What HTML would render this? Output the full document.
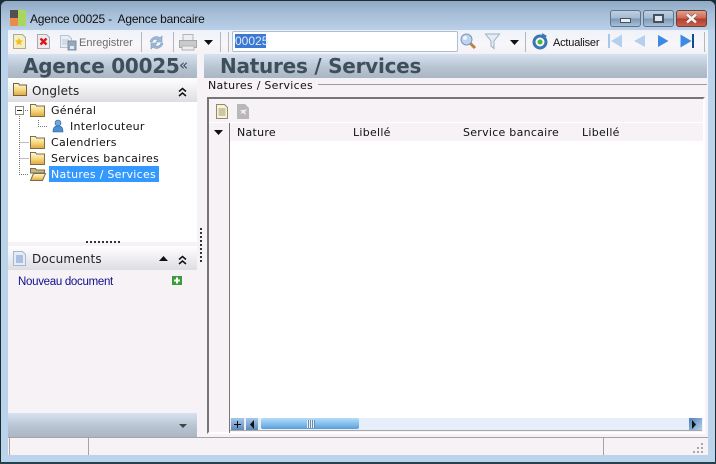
<!DOCTYPE html>
<html><head><meta charset="utf-8">
<style>
html,body{margin:0;padding:0;width:716px;height:464px;overflow:hidden;background:#1c2c34}
*{box-sizing:border-box}
.a{position:absolute}
.t{position:absolute;font-family:"DejaVu Sans",sans-serif;font-size:11px;line-height:14px;color:#111;white-space:nowrap;letter-spacing:.27px}
.l{position:absolute;font-family:"Liberation Sans",sans-serif;font-size:11px;line-height:14px;color:#111;white-space:nowrap}
.hd{position:absolute;font-family:"DejaVu Sans",sans-serif;font-weight:bold;font-size:20px;line-height:24px;color:#3e4f5c;white-space:nowrap;letter-spacing:-.25px}
svg{position:absolute;overflow:visible}
</style></head><body>
<svg width="0" height="0" style="left:0;top:0"><defs>
<linearGradient id="fg" x1="0" y1="0" x2="0" y2="1"><stop offset="0" stop-color="#fff8dc"/><stop offset=".5" stop-color="#f8d880"/><stop offset="1" stop-color="#e0a840"/></linearGradient>
</defs></svg>
<div class="a" id="win" style="left:1px;top:1px;width:714px;height:461px;border-radius:6px 6px 0 0;background:#bcd3ec"></div>
<div class="a" style="left:1px;top:1px;width:714px;height:30px;border-radius:6px 6px 0 0;background:linear-gradient(180deg,#8fa9c4 0,#a5bdd6 40%,#bbd1e9 100%)"></div>
<!-- title -->
<svg style="left:10px;top:10px" width="16" height="16"><rect width="8" height="8" fill="#55504f"/><rect x="8" width="8" height="16" fill="#a9d65c"/><rect y="8" width="8" height="8" fill="#ec8a4c"/></svg>
<div class="t" style="left:30px;top:12px;font-family:'Liberation Sans',sans-serif;font-size:12px;letter-spacing:-.2px;">Agence 00025 -&nbsp; Agence bancaire</div>
<!-- window buttons -->
<div class="a" style="left:610px;top:10px;width:31px;height:17px;border:1px solid #5f7487;border-radius:3px;background:linear-gradient(180deg,#bed0e3,#a4bbd2 45%,#7f9ab6 55%,#a8c0d8)"></div>
<div class="a" style="left:620px;top:18px;width:11px;height:5px;background:#e8eef4;border:1px solid #44525e"></div>
<div class="a" style="left:643px;top:10px;width:31px;height:17px;border:1px solid #5f7487;border-radius:3px;background:linear-gradient(180deg,#bed0e3,#a4bbd2 45%,#7f9ab6 55%,#a8c0d8)"></div>
<div class="a" style="left:653px;top:14px;width:11px;height:9px;background:#dfe8f0;border:2px solid #44525e"></div>
<div class="a" style="left:676px;top:10px;width:31px;height:17px;border:1px solid #6b4038;border-radius:3px;background:linear-gradient(180deg,#e0a090,#cf6a56 45%,#b24030 55%,#c8604c)"></div>
<svg style="left:685px;top:13px" width="13" height="11"><path d="M2 1.500l9 8m0-8l-9 8" stroke="#3a2420" stroke-width="3.600" opacity=".55"/><path d="M2 1.500l9 8m0-8l-9 8" stroke="#f6f6f6" stroke-width="2.600"/></svg>

<!-- toolbar -->
<div class="a" style="left:8px;top:30px;width:700px;height:24px;background:linear-gradient(180deg,#eef2f8,#f8f6fa 60%,#f4f1f5)"></div>
<svg style="left:13px;top:34px" width="13" height="15"><path d="M.5.5h9l3 3v11H.5z" fill="#f5efc8" stroke="#b0a890"/><path d="M6 3.500l1.200 2.700 2.800.3-2 2 .6 2.800L6 9.900l-2.600 1.400.6-2.800-2-2 2.800-.3z" fill="#f0c020"/></svg>
<svg style="left:37px;top:34px" width="13" height="15"><path d="M.5.5h9l3 3v11H.5z" fill="#ececf0" stroke="#a8a8b0"/><path d="M3.500 4.500l6 6m0-6l-6 6" stroke="#d81818" stroke-width="2.400"/></svg>
<svg style="left:60px;top:35px" width="17" height="15"><path d="M.5.5h8l3 3v9H.5z" fill="#e8eef6" stroke="#b8c4d0"/><path d="M2 5h7M2 7h7M2 9h7" stroke="#bcc8d6"/><rect x="8" y="6" width="8" height="9" fill="#96a8bc" stroke="#7e90a8"/><rect x="10" y="11" width="4" height="3" fill="#e4eaf2"/></svg>
<div class="l" style="left:79px;top:36px;color:#6c6c6c">Enregistrer</div>
<div class="a" style="left:141px;top:32px;width:1px;height:20px;background:#b2b8c0"></div>
<svg style="left:148px;top:34px" width="17" height="17"><path d="M2 8C3 3 9 1 12 4l2-2v6H8l2-2C8 4.500 5 5 4 8z" fill="#9db8d4" stroke="#7e9cba" stroke-width=".6"/><path d="M15 9C14 14 8 16 5 13l-2 2V9h6l-2 2c2 2 5 1.500 6-2z" fill="#9db8d4" stroke="#7e9cba" stroke-width=".6"/></svg>
<div class="a" style="left:173px;top:32px;width:1px;height:20px;background:#b2b8c0"></div>
<svg style="left:179px;top:34px" width="18" height="17"><rect x="4" y=".5" width="10" height="6" fill="#eceef0" stroke="#b0b4b8"/><rect x=".5" y="6.500" width="17" height="7" fill="#c8cacc" stroke="#a4a6a8"/><rect x="3" y="12" width="12" height="4" fill="#ecedee" stroke="#b0b2b4"/></svg>
<svg style="left:204px;top:40px" width="9" height="5"><path d="M0 0h9L4.500 5z" fill="#111"/></svg>
<div class="a" style="left:220px;top:32px;width:1px;height:20px;background:#b2b8c0"></div>
<div class="a" style="left:228px;top:32px;width:1px;height:20px;background:#b2b8c0"></div>
<div class="a" style="left:232px;top:31px;width:226px;height:21px;background:#fff;border:1px solid #a9bfd3;border-radius:2px"></div>
<div class="a" style="left:235px;top:34px;width:31px;height:14px;background:#3a78d4"></div>
<div class="l" style="left:235px;top:34px;font-size:12px;color:#dfeaf8">00025</div>
<svg style="left:460px;top:33px" width="17" height="17"><path d="M10 10l5 5" stroke="#b8843c" stroke-width="3"/><circle cx="6.500" cy="6.500" r="5.500" fill="#bcd4f4" stroke="#8296b8"/><circle cx="5" cy="5" r="2" fill="#eef4fc"/></svg>
<svg style="left:485px;top:33px" width="16" height="17"><path d="M.5 1h14L9 8v7.500L6 13V8z" fill="#e4edf5" stroke="#9cb0c4"/></svg>
<svg style="left:510px;top:40px" width="9" height="5"><path d="M0 0h9L4.500 5z" fill="#111"/></svg>
<div class="a" style="left:525px;top:32px;width:1px;height:20px;background:#b2b8c0"></div>
<svg style="left:532px;top:33px" width="17" height="17"><circle cx="8" cy="9" r="6" fill="none" stroke="#3b76b4" stroke-width="3"/><circle cx="8" cy="9" r="2.500" fill="#42b83c"/><path d="M10 0l5 3-4 3z" fill="#3b76b4"/></svg>
<div class="l" style="left:553px;top:36px;font-size:11px;letter-spacing:-.2px">Actualiser</div>
<svg style="left:608px;top:34px" width="15" height="15"><rect width="2" height="14" x="0" fill="#a8c8ea"/><path d="M14 .5v13L3 7z" fill="#b4d0ee"/></svg>
<svg style="left:633px;top:34px" width="13" height="15"><path d="M12 1v12L1 7z" fill="#b4d0ee"/></svg>
<svg style="left:657px;top:34px" width="13" height="15"><path d="M1 1v12L11.500 7z" fill="#3c8ae4"/></svg>
<svg style="left:680px;top:34px" width="15" height="15"><path d="M.5.500v13L11.500 7z" fill="#3c8ae4"/><rect x="12" width="2" height="14" fill="#134a94"/></svg>
<div class="a" style="left:704px;top:32px;width:1px;height:20px;background:#b2b8c0"></div>

<!-- main content bg -->
<div class="a" style="left:8px;top:54px;width:700px;height:401px;background:#f6f2f6"></div>
<!-- left header -->
<div class="a" style="left:8px;top:54px;width:189px;height:24px;background:linear-gradient(180deg,#d6e2f0,#b8c4d2 55%,#aab6c4)"></div>
<div class="hd" style="left:23px;top:54px">Agence 00025</div>
<div class="t" style="left:179px;top:58px;color:#3e4f5c;font-size:15px">«</div>
<!-- right header -->
<div class="a" style="left:204px;top:54px;width:503px;height:24px;background:linear-gradient(180deg,#d6e2f0,#b8c4d2 55%,#aab6c4)"></div>
<div class="hd" style="left:220px;top:54px">Natures / Services</div>

<!-- Onglets -->
<div class="a" style="left:8px;top:78px;width:189px;height:24px;background:linear-gradient(180deg,#fff,#f2f1f4 40%,#dedde2)"></div>
<svg style="left:13px;top:83px" width="14" height="13"><path d="M.5.500h5l1 1.500h7v10.500H.5z" fill="url(#fg)" stroke="#6e6242"/></svg>
<div class="t" style="left:32px;top:84px;font-size:12px;line-height:15px;color:#222;letter-spacing:.15px">Onglets</div>
<svg style="left:178px;top:87px" width="9" height="10" fill="none" stroke="#111" stroke-width="1.500"><path d="M1 4.500l3.500-3 3.500 3M1 9l3.500-3 3.500 3"/></svg>
<div class="a" style="left:8px;top:102px;width:189px;height:140px;background:#fff"></div>

<!-- tree -->
<svg style="left:16px;top:104px" width="40" height="76" fill="none" stroke="#777" stroke-dasharray="1 1"><path d="M3.500 10V70.500H13M9 6.500h4M3.500 38.500H13M3.500 54.500H13M22.500 16v6.500H32"/></svg>
<div class="a" style="left:15px;top:106px;width:9px;height:9px;background:#fff;border:1px solid #8a8a8a"></div>
<div class="a" style="left:17px;top:110px;width:5px;height:1px;background:#222"></div>
<svg style="left:30px;top:104px" width="16" height="13"><path d="M.5.500h5l1 1.500h8v10.500H.5z" fill="url(#fg)" stroke="#7a6e4a"/></svg>
<svg style="left:30px;top:136px" width="16" height="13"><path d="M.5.500h5l1 1.500h8v10.500H.5z" fill="url(#fg)" stroke="#7a6e4a"/></svg>
<svg style="left:30px;top:152px" width="16" height="13"><path d="M.5.500h5l1 1.500h8v10.500H.5z" fill="url(#fg)" stroke="#7a6e4a"/></svg>
<svg style="left:30px;top:168px" width="16" height="13"><path d="M.5.500h5l1 1.500h8v3H.5z" fill="#c8b888" stroke="#7a6e4a"/><path d="M.5 12.500l3-7h12l-3 7z" fill="url(#fg)" stroke="#7a6e4a"/></svg>
<svg style="left:52px;top:119px" width="12" height="14"><circle cx="6" cy="4" r="3" fill="#6ea8dc" stroke="#2c5c94" stroke-width=".6"/><path d="M1 13c0-5 2-6 5-6s5 1 5 6z" fill="#4a92d4" stroke="#2c5c94" stroke-width=".6"/></svg>
<div class="t" style="left:51px;top:104px">Général</div>
<div class="t" style="left:70px;top:120px">Interlocuteur</div>
<div class="t" style="left:51px;top:136px">Calendriers</div>
<div class="t" style="left:51px;top:152px">Services bancaires</div>
<div class="a" style="left:49px;top:166px;width:110px;height:16px;background:#3399ff"></div>
<div class="t" style="left:51px;top:168px;color:#fff">Natures / Services</div>

<!-- splitter -->
<div class="a" style="left:86px;top:241px;width:34px;height:2px;background:repeating-linear-gradient(90deg,#333 0,#333 2px,transparent 2px,transparent 4px)"></div>
<div class="a" style="left:200px;top:228px;width:2px;height:36px;background:repeating-linear-gradient(180deg,#333 0,#333 2px,transparent 2px,transparent 4px)"></div>

<!-- Documents -->
<div class="a" style="left:8px;top:246px;width:189px;height:24px;background:linear-gradient(180deg,#fff,#f2f1f4 40%,#dedde2)"></div>
<svg style="left:13px;top:251px" width="13" height="15"><path d="M.5.500h9l3 3v11H.5z" fill="#e4ecf8" stroke="#a8b8d0"/><path d="M3 5h7M3 7h7M3 9h7M3 11h7" stroke="#7890c8"/></svg>
<div class="t" style="left:32px;top:252px;font-size:12px;line-height:15px;color:#222;letter-spacing:.15px">Documents</div>
<svg style="left:159px;top:256px" width="9" height="5"><path d="M0 5L4.500 0 9 5z" fill="#111"/></svg>
<svg style="left:178px;top:255px" width="9" height="10" fill="none" stroke="#111" stroke-width="1.500"><path d="M1 4.500l3.500-3 3.500 3M1 9l3.500-3 3.500 3"/></svg>
<div class="l" style="left:18px;top:275px;color:#10108c;font-size:11.5px;letter-spacing:-.3px">Nouveau document</div>
<svg style="left:172px;top:276px" width="10" height="10"><rect width="10" height="9" fill="#3c9c3c"/><path d="M5 1.500v6M2 4.500h6" stroke="#fff" stroke-width="2"/></svg>

<!-- left bottom -->
<div class="a" style="left:8px;top:413px;width:189px;height:24px;background:linear-gradient(180deg,#d6e2f0,#b8c4d2 55%,#aab6c4)"></div>
<svg style="left:179px;top:424px" width="8" height="4"><path d="M0 0h8L4 4z" fill="#444"/></svg>

<!-- right content -->
<div class="t" style="left:208px;top:79px">Natures / Services</div>
<div class="a" style="left:318px;top:84px;width:389px;height:1px;background:#9c9c9c"></div>
<div class="a" style="left:207px;top:97px;width:498px;height:337px;border:2px solid #fff;border-top:2px solid #767676;border-left:2px solid #767676;background:#f6f2f6"></div>
<svg style="left:216px;top:104px" width="13" height="16"><path d="M.5.500h8l3 3v11H.5z" fill="#fbf4c4" stroke="#888"/><path d="M2.500 5h7M2.500 7h7M2.500 9h7M2.500 11h7" stroke="#9a9a8a"/></svg>
<svg style="left:237px;top:104px" width="12" height="15"><path d="M0 0h8l4 4v11H0z" fill="#b8b8b8"/><path d="M3 6l2 2-2 2 3-1 3 2-1-3 2-3-3 1z" fill="#eee"/></svg>
<div class="a" style="left:209px;top:122px;width:494px;height:1px;background:#fff"></div>
<svg style="left:214px;top:130px" width="9" height="5"><path d="M0 0h9L4.500 5z" fill="#111"/></svg>
<div class="a" style="left:229px;top:123px;width:1px;height:310px;background:#767676"></div>
<div class="t" style="left:237px;top:126px">Nature</div>
<div class="t" style="left:353px;top:126px">Libellé</div>
<div class="t" style="left:463px;top:126px">Service bancaire</div>
<div class="t" style="left:582px;top:126px">Libellé</div>
<div class="a" style="left:230px;top:141px;width:473px;height:277px;background:#fff"></div>

<!-- scrollbar -->
<div class="a" style="left:230px;top:418px;width:472px;height:13px;background:#e6eefa"></div>
<div class="a" style="left:231px;top:418px;width:13px;height:13px;background:linear-gradient(180deg,#a8c8e8,#5884b8)"></div>
<div class="a" style="left:234px;top:424px;width:7px;height:1px;background:#111"></div>
<div class="a" style="left:237px;top:421px;width:1px;height:7px;background:#111"></div>
<div class="a" style="left:246px;top:418px;width:12px;height:13px;background:linear-gradient(180deg,#a8c8e8,#5884b8)"></div>
<svg style="left:250px;top:420px" width="5" height="9"><path d="M4 0v9L0 4.500z" fill="#111"/></svg>
<div class="a" style="left:261px;top:418px;width:98px;height:11px;border-radius:2px;background:linear-gradient(180deg,#b8dcf6,#7cbcec 60%,#5c9cd4)"></div>
<div class="a" style="left:307px;top:420px;width:8px;height:8px;background:repeating-linear-gradient(90deg,#e8f2fa 0,#e8f2fa 1px,#6a8cac 1px,#6a8cac 2px)"></div>
<div class="a" style="left:689px;top:418px;width:13px;height:13px;background:linear-gradient(135deg,#4f80b8,#b8d4ea)"></div>
<svg style="left:692px;top:420px" width="5" height="9"><path d="M0 0v9l4-4.500z" fill="#111"/></svg>
<div class="a" style="left:230px;top:430px;width:472px;height:1px;background:#a8a8a8"></div>

<!-- status bar -->
<div class="a" style="left:8px;top:437px;width:700px;height:1px;background:#a4a4a4"></div>
<div class="a" style="left:9px;top:438px;width:1px;height:17px;background:#a4a4a4"></div>
<div class="a" style="left:88px;top:438px;width:1px;height:17px;background:#a4a4a4"></div>
<div class="a" style="left:603px;top:438px;width:1px;height:17px;background:#a4a4a4"></div>
<svg style="left:693px;top:443px" width="12" height="12" fill="#a8a8a8"><rect x="8" y="0" width="2" height="2"/><rect x="4" y="4" width="2" height="2"/><rect x="8" y="4" width="2" height="2"/><rect x="0" y="8" width="2" height="2"/><rect x="4" y="8" width="2" height="2"/><rect x="8" y="8" width="2" height="2"/></svg>
<div class="a" style="left:0;top:462px;width:716px;height:2px;background:#24414f"></div>
</body></html>
